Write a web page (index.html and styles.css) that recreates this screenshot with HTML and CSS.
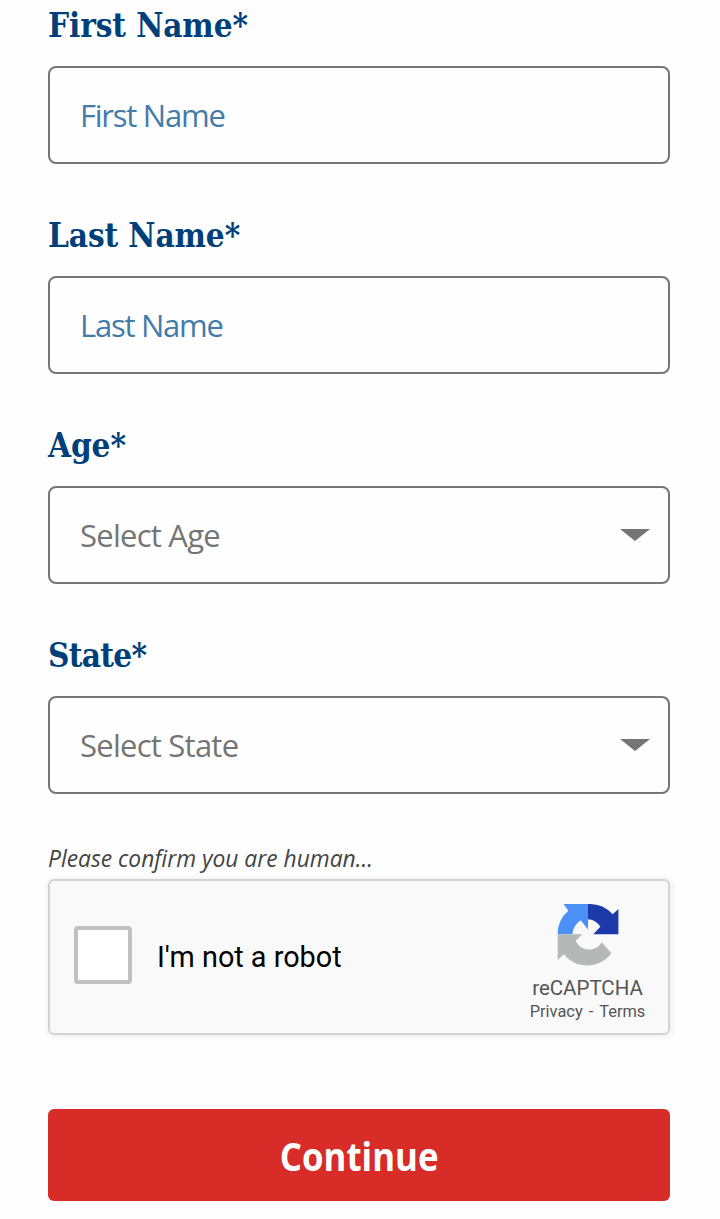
FILE: index.html
```html
<!DOCTYPE html>
<html lang="en">
  <head>
    <meta charset="UTF-8" />
    <meta name="viewport" content="width=device-width, initial-scale=1.0" />
    <title>Sign up</title>
    <link rel="stylesheet" href="styles.css">
  </head>
  <body>
    <form class="form">
      <div class="field">
        <label class="label" for="first">First Name*</label>
        <input class="control" id="first" type="text" placeholder="First Name" />
      </div>
      <div class="field">
        <label class="label" for="last">Last Name*</label>
        <input class="control" id="last" type="text" placeholder="Last Name" />
      </div>
      <div class="field">
        <label class="label" for="age">Age*</label>
        <div class="select-wrap">
          <select class="control select" id="age">
            <option>Select Age</option>
          </select>
          <svg class="arrow" viewBox="0 0 30 12"><path d="M0 0h30L15 12z" /></svg>
        </div>
      </div>
      <div class="field">
        <label class="label label-state" for="state">State*</label>
        <div class="select-wrap">
          <select class="control select" id="state">
            <option>Select State</option>
          </select>
          <svg class="arrow" viewBox="0 0 30 12"><path d="M0 0h30L15 12z" /></svg>
        </div>
      </div>

      <p class="confirm"><span class="confirm-text">Please confirm you are human...</span></p>
      <div class="captcha">
        <span class="checkbox"></span>
        <span class="robot">I'm not a robot</span>
        <div class="brand">
          <svg class="logo" viewBox="557 903 62 64">
            <path fill="#4a90f7" d="M557.7 934.3A30.5 30.5 0 0 1 568.3 910.7L563.6 904H588V929.5L580.7 920.3Q573 925.5 572.3 934.3z" />
            <path fill="#1c3aa9" d="M588 904A31 31 0 0 1 612.7 914.3L618.4 909V934.3H593.3L600.3 926.7Q595.5 919.6 588 919.3z" />
            <path fill="#b4b8b7" d="M557.7 934.3H582.3L575.7 940.7C581 952 596 952.5 601.7 942.3L611.3 953.3C599 969.5 576 969.5 564 954.3L557.7 960z" />
          </svg>
          <div class="brand-name">reCAPTCHA</div>
          <div class="links"><span>Privacy</span><span>-</span><span>Terms</span></div>
        </div>
      </div>

      <button class="submit" type="button"><span class="submit-text">Continue</span></button>
    </form>
  </body>
</html>
```
FILE: styles.css
```css
* {
  box-sizing: border-box;
}

body {
  margin: 0;
  background-color: #fefefe;
  font-family: "Open Sans", "Noto Sans", sans-serif;
}

.form {
  width: 622px;
  margin-left: 48px;
}

.field {
  height: 210px;
}

.label {
  display: block;
  height: 66px;
  padding-top: 6px;
  line-height: 40px;
  font-family: "DejaVu Serif Condensed", "DejaVu Serif", serif;
  font-stretch: condensed;
  font-weight: bold;
  font-size: 33px;
  letter-spacing: -0.1px;
  color: #003f78;
  white-space: nowrap;
}

.label-state {
  letter-spacing: -0.7px;
}

.control {
  display: block;
  width: 100%;
  height: 98px;
  padding: 0 30px;
  border: 2px solid #757575;
  border-radius: 8px;
  background-color: #fefefe;
  appearance: none;
  font-family: "Open Sans", "Noto Sans", sans-serif;
  font-size: 31px;
  letter-spacing: -1.25px;
  color: #757575;
}

.control::placeholder {
  color: #437ba9;
  opacity: 1;
}

.select {
  letter-spacing: -0.75px;
}

.select-wrap {
  position: relative;
}

.arrow {
  position: absolute;
  top: 43px;
  right: 20px;
  width: 30px;
  height: 12px;
  fill: #757575;
}

.confirm {
  height: 39px;
  margin: 0;
  line-height: 35px;
  font-size: 24px;
  font-style: italic;
  color: #444;
  white-space: nowrap;
}

.confirm-text {
  display: inline-block;
  transform: scaleX(0.95);
  transform-origin: left;
}

.captcha {
  display: flex;
  align-items: center;
  height: 156px;
  padding: 0 22px 0 25px;
  border: 2px solid #d3d3d3;
  border-radius: 6px;
  background-color: #f9f9f9;
  box-shadow: 1px 1px 6px 1px rgba(0, 0, 0, 0.07);
  font-family: Roboto, sans-serif;
}

.checkbox {
  width: 58px;
  height: 58px;
  margin: -5px 0 0 -1px;
  border: 4px solid #c1c1c1;
  border-radius: 4px;
  background-color: #fff;
}

.robot {
  margin-left: 25px;
  font-size: 28.8px;
  color: #000;
}

.brand {
  display: flex;
  flex-direction: column;
  align-items: center;
  width: 117px;
  margin-left: auto;
  padding-top: 11px;
  color: #555;
}

.logo {
  width: 62px;
  height: 64px;
}

.brand-name {
  margin-top: 8px;
  line-height: 26px;
  font-size: 20.5px;
}

.links {
  display: flex;
  gap: 6px;
  line-height: 22px;
  font-size: 16.4px;
}

.submit {
  display: block;
  width: 100%;
  height: 92px;
  margin-top: 74px;
  padding: 0;
  border: 0;
  border-radius: 6px;
  background-color: #d82c29;
  font-family: "Open Sans", "Noto Sans", sans-serif;
  font-weight: bold;
  font-size: 40px;
  color: #fff;
}

.submit-text {
  display: inline-block;
  transform: scaleX(0.87);
}
```
